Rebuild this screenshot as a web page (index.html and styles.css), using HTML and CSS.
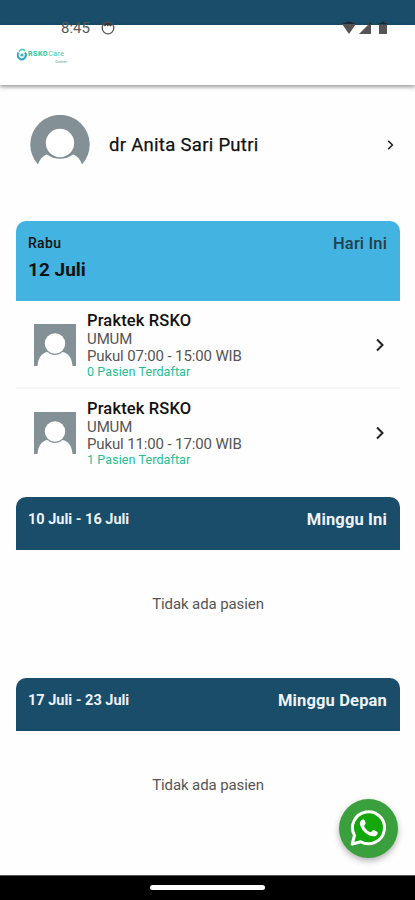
FILE: index.html
```
<!DOCTYPE html>
<html lang="id">
<head>
  <meta charset="utf-8">
  <meta name="viewport" content="width=device-width, initial-scale=1">
  <link rel="stylesheet" href="styles.css">
  <title>RSKO Care</title>
</head>
<body>
  <!-- shared icons -->
  <svg class="defs" width="0" height="0">
    <symbol id="chevron" viewBox="0 0 12 16"><path d="M3 2.500L8.500 8L3 13.500" fill="none" stroke="currentColor" stroke-width="2"/></symbol>
    <symbol id="person" viewBox="0 0 42 42">
      <path fill="#839096" d="M0 0h42v42h-3.500C38 35 35 29 28.500 28C24 32 18 32 13.500 28C7 29 4 35 3.500 42H0z"/>
      <circle cx="21" cy="19.500" r="10.200" fill="#fff"/>
    </symbol>
  </svg>

  <header class="header">
    <div class="strip"></div>
    <div class="appbar">
      <div class="logo">
        <svg width="10" height="13" viewBox="0 0 10 13">
          <path d="M1.500 4.500A4 4.300 0 1 0 8 4.500" fill="none" stroke="#27a9c5" stroke-width="2"/>
          <path d="M2 3.500Q5-.5 8 3" fill="none" stroke="#4fd3c0" stroke-width="1.800"/>
          <circle cx="5" cy="7" r="1.600" fill="#2bbfae"/>
        </svg>
        <div class="logo-text">
          <span><b>RSKO</b>Care</span>
          <small>Dokter</small>
        </div>
      </div>
    </div>
    <div class="status">
      <span class="time">8:45</span>
      <svg class="face" width="16" height="14" viewBox="0 0 16 14">
        <circle cx="8" cy="7" r="5.800" fill="none" stroke="#555" stroke-width="1.300"/>
        <path d="M3.500 3.500Q8-.5 12.500 3.500L10.500 5.500L9 4L8 5.500L6.500 4L5 5.500z" fill="#333"/>
      </svg>
      <svg width="48" height="14" viewBox="0 0 48 14">
        <path d="M1 3Q8-2 15 3L8 13z" fill="#555"/>
        <path d="M18 13L30 1v12z" fill="#555"/>
        <path d="M38 2h2.500V.5h3V2H46v11h-8z" fill="#555"/>
        <path d="M1 3Q8-2 15 3zM27.500 3.500L30 1v2.500zM38 2h2.500V.5h3V2H46v1.500h-8z" fill="#142b38"/>
      </svg>
    </div>
  </header>

  <main class="content">
    <a class="profile">
      <svg class="avatar" width="60" height="60" viewBox="0 0 60 60">
        <path fill="#839096" d="M8 49.500A29.700 29.700 0 1 1 52 49.500C50.500 45 48 41.500 43 39.500C36 45.200 24 45.200 17 39.500C12 41.500 9.500 45 8 49.500z"/>
        <circle cx="30" cy="28" r="14.200" fill="#fff"/>
      </svg>
      <span class="name">dr Anita Sari Putri</span>
      <svg class="chevron small" width="9" height="12"><use href="#chevron"/></svg>
    </a>

    <section class="today">
      <div class="card-head blue">
        <div>
          <div class="day">Rabu</div>
          <div class="date">12 Juli</div>
        </div>
        <div class="label">Hari Ini</div>
      </div>
      <a class="row">
        <svg class="thumb" width="42" height="42"><use href="#person"/></svg>
        <div class="info">
          <div class="title">Praktek RSKO</div>
          <div class="poli">UMUM</div>
          <div class="hour">Pukul 07:00 - 15:00 WIB</div>
          <div class="count">0 Pasien Terdaftar</div>
        </div>
        <svg class="chevron" width="12" height="16"><use href="#chevron"/></svg>
      </a>
      <a class="row">
        <svg class="thumb" width="42" height="42"><use href="#person"/></svg>
        <div class="info">
          <div class="title">Praktek RSKO</div>
          <div class="poli">UMUM</div>
          <div class="hour">Pukul 11:00 - 17:00 WIB</div>
          <div class="count">1 Pasien Terdaftar</div>
        </div>
        <svg class="chevron" width="12" height="16"><use href="#chevron"/></svg>
      </a>
    </section>

    <section class="week">
      <div class="card-head navy">
        <div class="range">10 Juli - 16 Juli</div>
        <div class="label">Minggu Ini</div>
      </div>
      <p class="empty">Tidak ada pasien</p>
    </section>

    <section class="week">
      <div class="card-head navy">
        <div class="range">17 Juli - 23 Juli</div>
        <div class="label">Minggu Depan</div>
      </div>
      <p class="empty">Tidak ada pasien</p>
    </section>
  </main>

  <a class="whatsapp">
    <svg width="38" height="38" viewBox="0 0 38 38">
      <path d="M3.200 35L5.500 26.500A16 16 0 1 1 11.700 32.700z" fill="#14a80c" stroke="#fff" stroke-width="3" stroke-linejoin="round"/>
      <path d="M13.600 10.500C12 10.800 10.800 12.600 10.900 14.500C11.400 20.500 18.500 27.300 24.500 27.300C26.500 27.300 28.600 25.800 28.800 23.900C28.800 23 25 20.900 24.200 21C23.300 21.200 22.400 23.300 21.500 23.200C19 22.500 16 19.500 15.100 17.200C15 16.300 16.700 15.300 16.700 14.300C16.500 13 15.500 10.700 14.800 10.500z" fill="#fff"/>
    </svg>
  </a>

  <footer class="navbar"><span></span></footer>
</body>
</html>
```
FILE: styles.css
```
*{ box-sizing: border-box; }
body{
  margin: 0;
  height: 900px;
  display: flex;
  flex-direction: column;
  position: relative;
  overflow: hidden;
  background: #fefefe;
  color: #111;
  font-family: Roboto, "Liberation Sans", sans-serif;
}
svg{ display: block; flex: none; }
.defs{ position: absolute; }

/* header */
.header{ position: relative; flex: none; }
.strip{ height: 25px; background: #194d6a; }
.appbar{
  height: 60px;
  padding: 23px 17px 0;
  background: #fff;
  box-shadow: 0 2px 4px rgba(0,0,0,.4);
}
.logo{ display: flex; gap: 1px; }
.logo-text{
  display: flex;
  flex-direction: column;
  width: 39px;
  padding-top: 2px;
  color: #35cfa5;
  font-size: 7px;
  line-height: 9px;
}
.logo-text span{ letter-spacing: .5px; }
.logo-text b{ font-weight: 900; }
.logo-text small{ align-self: flex-end; font-size: 4px; line-height: 5px; color: #5aa; }
.status{
  position: absolute;
  left: 61px;
  right: 26px;
  top: 21px;
  display: flex;
  align-items: center;
  height: 14px;
  color: #555;
}
.time{ font-size: 15px; line-height: 14px; }
.face{ margin: 0 auto 0 10px; }

/* content */
.content{ flex: 1; padding: 0 15px 0 16px; }
.profile{
  display: flex;
  align-items: center;
  height: 120px;
  margin-bottom: 16px;
  padding: 0 5px 0 14px;
}
.name{
  flex: 1;
  margin-left: 19px;
  font-size: 18.5px;
  line-height: 22px;
  letter-spacing: .3px;
  -webkit-text-stroke: .25px;
}
.chevron{ color: #222; }

.card-head{
  display: flex;
  justify-content: space-between;
  padding: 12px 13px 12px 12px;
  border-radius: 10px 10px 0 0;
}
.blue{ height: 80px; background: #43b4e1; }
.navy{ height: 53px; color: #eef3fa; background: #194d6a; }
.day{ font-size: 14px; line-height: 20px; font-weight: 500; letter-spacing: .3px; }
.date{ margin-top: 7px; font-size: 19px; line-height: 20px; font-weight: 700; }
.label{ font-size: 16.5px; line-height: 21px; font-weight: 500; letter-spacing: .15px; }
.blue .label{ color: #25404d; }
.navy .label{ font-weight: 700; }
.range{ font-size: 14.5px; line-height: 21px; font-weight: 700; }

.row{
  display: flex;
  align-items: center;
  height: 88px;
  padding: 0 14px 0 18px;
}
.row:not(:last-child){ box-shadow: inset 0 -2px #f5f5f5; }
.info{ flex: 1; margin-left: 11px; color: #555; }
.title{ font-size: 16.5px; line-height: 20px; font-weight: 500; letter-spacing: .15px; color: #111; }
.poli{ font-size: 15px; line-height: 17px; letter-spacing: -.1px; }
.hour{ font-size: 15px; line-height: 17px; letter-spacing: -.13px; }
.count{ margin-top: -1px; padding-bottom: 1px; font-size: 12.5px; line-height: 15px; letter-spacing: .1px; color: #1fbd93; }

.week{ height: 181px; }
.today{ height: 276px; }
.empty{
  margin: 44px 0 0;
  text-align: center;
  font-size: 15px;
  line-height: 21px;
  letter-spacing: -.1px;
  color: #555;
}

/* floating chat button */
.whatsapp{
  position: absolute;
  right: 17px;
  bottom: 42px;
  width: 59px;
  height: 59px;
  padding: 10px;
  border-radius: 50%;
  background: #3a9f3d;
  box-shadow: 0 3px 6px rgba(0,0,0,.3);
}

/* gesture bar */
.navbar{
  flex: none;
  height: 25px;
  padding-top: 9px;
  border-top: 1px solid #555;
  background: #000;
}
.navbar span{
  display: block;
  width: 115px;
  height: 5px;
  margin: 0 auto;
  border-radius: 3px;
  background: #fff;
}
```
